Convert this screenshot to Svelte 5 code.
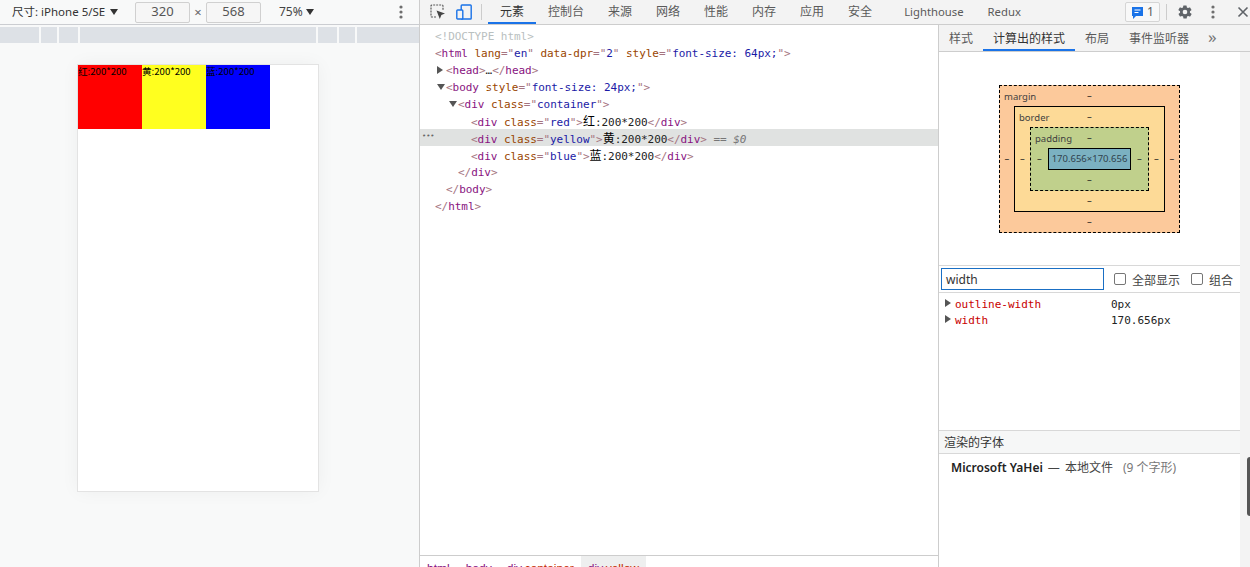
<script lang="ts">
	const mainTabs = ['元素', '控制台', '来源', '网络', '性能', '内存', '应用', '安全', 'Lighthouse', 'Redux'];
	const sideTabs = ['样式', '计算出的样式', '布局', '事件监听器'];
	const colors = [
		{ name: 'red', glyph: '红' },
		{ name: 'yellow', glyph: '黄' },
		{ name: 'blue', glyph: '蓝' }
	];
</script>

{#snippet dots()}
	<svg class="dots" width="4" height="14" viewBox="0 0 4 14"><circle cx="2" cy="2" r="1.6" /><circle cx="2" cy="7" r="1.6" /><circle cx="2" cy="12" r="1.6" /></svg>
{/snippet}

{#snippet open(name: string, attr: string, value: string)}
	<span class="br">&lt;</span><span class="tag">{name}</span>
	<span class="attr">{attr}</span><span class="br">="</span><span class="val">{value}</span><span class="br">"&gt;</span>
{/snippet}

<div class="page">
	<section class="device-pane">
		<header class="device-bar">
			<span class="size-label">尺寸: iPhone 5/SE</span>
			<i class="arrow-down"></i>
			<span class="dim first">320</span>
			<span class="times">×</span>
			<span class="dim">568</span>
			<span class="zoom-label">75%</span>
			<i class="arrow-down"></i>
			<span class="bar-dots">{@render dots()}</span>
		</header>
		<div class="media-bar">
			<span style="width:39px"></span>
			<span style="width:16px"></span>
			<span style="width:19px"></span>
			<span style="width:236px"></span>
			<span style="width:19px"></span>
			<span style="width:16px"></span>
			<span style="width:62px"></span>
		</div>
		<div class="screen">
			{#each colors as c}
				<div class="swatch {c.name}">{c.glyph}:200*200</div>
			{/each}
		</div>
	</section>

	<section class="devtools">
		<header class="main-tabs">
			<svg class="ic-inspect" width="16" height="16" viewBox="0 0 16 16" fill="none">
				<path d="M6 13H2a1 1 0 0 1-1-1V2a1 1 0 0 1 1-1h10a1 1 0 0 1 1 1v4" stroke="#5a5a5a" stroke-width="1.2" stroke-dasharray="2 1" />
				<path d="M6.5 6.5l8.5 3-3.6 1.5L9.8 15z" fill="#444" />
			</svg>
			<svg class="ic-device" width="16" height="16" viewBox="0 0 16 16" fill="none" stroke="#1a73e8" stroke-width="1.4">
				<rect x="5.2" y="1" width="10" height="14" rx="0.8" />
				<rect x="0.8" y="6" width="6" height="9" rx="0.8" fill="#f3f3f3" />
			</svg>
			<i class="vsep"></i>
			{#each mainTabs as t, i}
				<span class="tab" class:active={i === 0} class:gap={i === 7} class:latin={i > 7}>{t}</span>
			{/each}
			<span class="issues">
				<svg width="13" height="13" viewBox="0 0 13 13"><path d="M1 1h11v9H5l-3 3v-3H1z" fill="#1a73e8" /><path d="M3.5 4h6M3.5 6.5h4" stroke="#fff" /></svg>
				1
			</span>
			<i class="vsep sep2"></i>
			<svg class="gear" width="16" height="16" viewBox="0 0 24 24"><path fill="#5f6368" d="M19.4 13a7.6 7.6 0 0 0 0-2l2.1-1.6a.5.5 0 0 0 .1-.6l-2-3.5a.5.5 0 0 0-.6-.2l-2.5 1a7.3 7.3 0 0 0-1.7-1l-.4-2.6a.5.5 0 0 0-.5-.4h-4a.5.5 0 0 0-.5.4l-.4 2.6a7.7 7.7 0 0 0-1.7 1l-2.5-1a.5.5 0 0 0-.6.2l-2 3.5a.5.5 0 0 0 .1.6L4.6 11a7.6 7.6 0 0 0 0 2l-2.1 1.6a.5.5 0 0 0-.1.6l2 3.5c.1.2.4.3.6.2l2.5-1c.5.4 1.1.7 1.7 1l.4 2.6c0 .2.2.4.5.4h4c.3 0 .5-.2.5-.4l.4-2.6c.6-.3 1.2-.6 1.7-1l2.5 1c.2.1.5 0 .6-.2l2-3.5a.5.5 0 0 0-.1-.6zM12 15.5a3.5 3.5 0 1 1 0-7 3.5 3.5 0 0 1 0 7z" /></svg>
			<span class="head-dots">{@render dots()}</span>
			<svg class="close" width="12" height="12" viewBox="0 0 12 12"><path d="M1.5 1.5l9 9M10.5 1.5l-9 9" stroke="#5f6368" stroke-width="1.6" /></svg>
		</header>

		<div class="panels">
			<div class="elements">
				<div class="tree">
					<div class="row l0"><span class="doctype">&lt;!DOCTYPE html&gt;</span></div>
					<div class="row l0">
						<span class="br">&lt;</span><span class="tag">html</span>
						<span class="attr">lang</span><span class="br">="</span><span class="val">en</span><span class="br">"</span>
						<span class="attr">data-dpr</span><span class="br">="</span><span class="val">2</span><span class="br">"</span>
						<span class="attr">style</span><span class="br">="</span><span class="val">font-size: 64px;</span><span class="br">"&gt;</span>
					</div>
					<div class="row l1"><i class="tri closed"></i><span class="br">&lt;</span><span class="tag">head</span><span class="br">&gt;</span>…<span class="br">&lt;/</span><span class="tag">head</span><span class="br">&gt;</span></div>
					<div class="row l1"><i class="tri"></i>{@render open('body', 'style', 'font-size: 24px;')}</div>
					<div class="row l2"><i class="tri"></i>{@render open('div', 'class', 'container')}</div>
					{#each colors as c}
						<div class="row l3" class:selected={c.name === 'yellow'}>
							{#if c.name === 'yellow'}<span class="more">•••</span>{/if}
							{@render open('div', 'class', c.name)}<span class="cjk">{c.glyph}</span>:200*200<span class="br">&lt;/</span><span class="tag">div</span><span class="br">&gt;</span>
							{#if c.name === 'yellow'}<span class="eq">== $0</span>{/if}
						</div>
					{/each}
					<div class="row l2"><span class="br">&lt;/</span><span class="tag">div</span><span class="br">&gt;</span></div>
					<div class="row l1"><span class="br">&lt;/</span><span class="tag">body</span><span class="br">&gt;</span></div>
					<div class="row l0"><span class="br">&lt;/</span><span class="tag">html</span><span class="br">&gt;</span></div>
				</div>
				<footer class="crumbs">
					<span class="crumb"><b>html</b></span>
					<span class="crumb"><b>body</b></span>
					<span class="crumb"><b>div</b><em>.container</em></span>
					<span class="crumb on"><b>div</b><em>.yellow</em></span>
				</footer>
			</div>

			<aside class="sidebar">
				<div class="side-tabs">
					{#each sideTabs as t, i}
						<span class="side-tab" class:active={i === 1}>{t}</span>
					{/each}
					<span class="chevrons">»</span>
				</div>
				<div class="side-body">
					<div class="side-main">
						<div class="model">
							<div class="box margin">
								<span class="box-label">margin</span>
								<span class="top">–</span><span class="left">–</span>
								<div class="box border">
									<span class="box-label">border</span>
									<span class="top">–</span><span class="left">–</span>
									<div class="box padding">
										<span class="box-label">padding</span>
										<span class="top">–</span><span class="left">–</span>
										<div class="content">170.656×170.656</div>
										<span class="right">–</span><span class="bottom">–</span>
									</div>
									<span class="right">–</span><span class="bottom">–</span>
								</div>
								<span class="right">–</span><span class="bottom">–</span>
							</div>
						</div>

						<div class="filter">
							<span class="filter-input">width</span>
							<label><i class="check"></i>全部显示</label>
							<label><i class="check"></i>组合</label>
						</div>
						<div class="props">
							<div class="prop"><i class="tri closed"></i><span class="prop-name">outline-width</span><span class="prop-val">0px</span></div>
							<div class="prop"><i class="tri closed"></i><span class="prop-name">width</span><span class="prop-val">170.656px</span></div>
						</div>

						<div class="fonts-head">渲染的字体</div>
						<div class="font-line">
							<strong>Microsoft YaHei</strong>
							<span>—</span>
							<span>本地文件</span>
							<span class="glyphs">(9 个字形)</span>
						</div>
					</div>
					<div class="scroll"><i class="thumb"></i></div>
				</div>
			</aside>
		</div>
	</section>
</div>

<style>
	:global(body) {
		margin: 0;
		overflow: hidden;
	}

	.page {
		display: flex;
		width: 1250px;
		height: 567px;
		overflow: hidden;
		background: #fff;
		color: #333;
		font: 12px 'Noto Sans', 'Noto Sans CJK SC', sans-serif;
	}

	i {
		display: block;
		flex: none;
	}

	/* device emulation pane */
	.device-pane {
		width: 419px;
		flex: none;
		background: #f8f9f9;
		border-right: 1px solid #cdcdcd;
		display: flex;
		flex-direction: column;
	}

	.device-bar {
		height: 24px;
		flex: none;
		display: flex;
		align-items: center;
		padding-left: 12px;
		border-bottom: 1px solid #cbcdd1;
	}

	.size-label {
		width: 98px;
		padding-bottom: 2px;
		font-size: 11.5px;
		white-space: nowrap;
	}

	.arrow-down {
		width: 0;
		height: 0;
		border: 4px solid transparent;
		border-top: 6px solid #333;
		border-bottom: 0;
	}

	.dim {
		width: 53px;
		height: 19px;
		border: 1px solid #d0d0d0;
		border-radius: 2px;
		background: #f6f6f6;
		color: #555;
		font-size: 13px;
		line-height: 17px;
		text-align: center;
	}

	.dim.first {
		margin-left: 17px;
	}

	.times {
		width: 16px;
		text-align: center;
		color: #666;
		font-size: 13px;
	}

	.zoom-label {
		margin: 0 3px 0 18px;
		padding-bottom: 2px;
		color: #444;
	}

	.bar-dots {
		margin-left: 85px;
		display: flex;
	}

	.dots {
		fill: #6e6e6e;
	}

	.media-bar {
		display: flex;
		gap: 2px;
		margin-top: 2px;
		flex: none;
	}

	.media-bar span {
		height: 16px;
		background: #dde1e6;
	}

	.screen {
		width: 240px;
		height: 426px;
		margin: 22px 0 0 78px;
		display: flex;
		align-items: flex-start;
		background: #fff;
		outline: 1px solid #e3e3e3;
		box-shadow: 0 0 18px rgba(0, 0, 0, 0.05);
	}

	.swatch {
		width: 64px;
		height: 64px;
		color: #000;
		font: 9.6px/12px 'Noto Sans CJK SC', sans-serif;
		white-space: nowrap;
	}

	.red {
		background: #ff0000;
	}

	.yellow {
		background: #ffff1f;
	}

	.blue {
		background: #0000ff;
	}

	/* devtools */
	.devtools {
		flex: 1;
		min-width: 0;
		display: flex;
		flex-direction: column;
	}

	.main-tabs {
		height: 24px;
		flex: none;
		display: flex;
		align-items: center;
		background: #f3f3f3;
		border-bottom: 1px solid #cdcdcd;
		color: #5a5a5a;
	}

	.ic-inspect {
		margin-left: 10px;
	}

	.ic-device {
		margin-left: 10px;
	}

	.vsep {
		width: 1px;
		height: 16px;
		margin: 0 6px 0 9px;
		background: #ccc;
	}

	.tab {
		height: 24px;
		line-height: 24px;
		padding: 0 12px;
		box-sizing: border-box;
		white-space: nowrap;
	}

	.tab.gap {
		padding-right: 20px;
	}

	.tab.latin {
		font-size: 11.3px;
	}

	.tab.active {
		color: #333;
		border-bottom: 2px solid #1a73e8;
	}

	.issues {
		width: 35px;
		height: 20px;
		margin-left: auto;
		display: flex;
		align-items: center;
		justify-content: center;
		gap: 3px;
		box-sizing: border-box;
		border: 1px solid #d5d5d5;
		border-radius: 2px;
		background: #f8f8f8;
		line-height: 1;
	}

	.sep2 {
		margin: 0 10px 0 6px;
	}

	.head-dots {
		display: flex;
		margin-left: 18px;
	}

	.close {
		margin: 0 1px 0 22px;
	}

	.panels {
		flex: 1;
		min-height: 0;
		display: flex;
	}

	/* elements tree */
	.elements {
		width: 518px;
		flex: none;
		display: flex;
		flex-direction: column;
		border-right: 1px solid #cdcdcd;
	}

	.tree {
		flex: 1;
		padding-top: 2px;
		font: 11px/19px 'DejaVu Sans Mono', monospace;
		letter-spacing: -0.04px;
		color: #222;
	}

	.row {
		position: relative;
		height: 17px;
		white-space: nowrap;
	}

	.l0 {
		padding-left: 15px;
	}

	.l1 {
		padding-left: 26px;
	}

	.l2 {
		padding-left: 38px;
	}

	.l3 {
		padding-left: 51px;
	}

	.selected {
		background: #e0e2e1;
	}

	.more {
		position: absolute;
		left: 2px;
		top: -2px;
		color: #666;
		font-size: 7px;
	}

	.eq {
		color: #777;
		font-style: italic;
	}

	.cjk {
		font: 12px/17px 'Noto Sans CJK SC', sans-serif;
		color: #000;
	}

	.doctype {
		color: #b9c0c0;
	}

	.br {
		color: #a5747f;
	}

	.tag {
		color: #881280;
	}

	.attr {
		color: #994500;
	}

	.val {
		color: #1a1aa6;
	}

	.tri {
		position: absolute;
		width: 0;
		height: 0;
		margin: 6px 0 0 -9px;
		border: 4px solid transparent;
		border-top: 6px solid #555;
		border-bottom: 0;
	}

	.tri.closed {
		margin-top: 5px;
		border: 4px solid transparent;
		border-left: 6px solid #555;
		border-right: 0;
	}

	.crumbs {
		height: 11px;
		flex: none;
		display: flex;
		border-top: 1px solid #cdcdcd;
		overflow: hidden;
		font: 12px/26px 'Liberation Sans', sans-serif;
	}

	.crumb {
		padding: 0 7px;
		height: 11px;
	}

	.crumb:first-child {
		padding-right: 9px;
	}

	.crumb:nth-child(2) {
		padding-right: 8px;
	}

	.crumb b {
		font-weight: 400;
		color: #881280;
	}

	.crumb em {
		font-style: normal;
		color: #c42b00;
	}

	.crumb.on {
		background: #eeefef;
	}

	/* right sidebar */
	.sidebar {
		flex: 1;
		min-width: 0;
		display: flex;
		flex-direction: column;
	}

	.side-tabs {
		height: 26px;
		flex: none;
		display: flex;
		background: #f3f3f3;
		border-bottom: 1px solid #cdcdcd;
		color: #5a5a5a;
	}

	.side-tab {
		height: 26px;
		padding: 0 10px;
		line-height: 27px;
		box-sizing: border-box;
		white-space: nowrap;
	}

	.side-tab.active {
		color: #333;
		border-bottom: 2px solid #1a73e8;
	}

	.chevrons {
		margin-left: 9px;
		font-size: 17px;
		line-height: 24px;
		color: #777;
	}

	.side-body {
		flex: 1;
		min-height: 0;
		display: flex;
	}

	.side-main {
		flex: 1;
		min-width: 0;
		display: flex;
		flex-direction: column;
	}

	.model {
		height: 214px;
		flex: none;
		padding: 33px 0 0 60px;
		box-sizing: border-box;
		border-bottom: 1px solid #d8d8d8;
		font-size: 9.5px;
		color: #222;
	}

	.box {
		position: relative;
		display: grid;
		grid-template-columns: 14px auto 14px;
		grid-template-rows: 20px auto 20px;
		grid-template-areas: '. top .' 'left mid right' '. bottom .';
		width: fit-content;
		align-items: center;
		justify-items: center;
		line-height: 1;
	}

	.box > .box,
	.box > .content {
		grid-area: mid;
	}

	.top {
		grid-area: top;
	}

	.left {
		grid-area: left;
	}

	.right {
		grid-area: right;
	}

	.bottom {
		grid-area: bottom;
	}

	.box-label {
		position: absolute;
		left: 4px;
		top: 6px;
		color: #3f3f3f;
	}

	.margin {
		border: 1px dashed #000;
		background: #fcc99b;
	}

	.border {
		border: 1px solid #000;
		background: #fdda97;
		grid-template-columns: 15px auto 15px;
	}

	.padding {
		border: 1px dashed #000;
		background: #c0d08c;
		grid-template-columns: 17px auto 17px;
	}

	.content {
		width: 81px;
		height: 20px;
		border: 1px solid #000;
		background: #7bb1c1;
		font-size: 9.5px;
		line-height: 20px;
		text-align: center;
		white-space: nowrap;
		color: #30424d;
	}

	.filter {
		height: 26px;
		flex: none;
		display: flex;
		align-items: center;
		gap: 9px;
		padding-left: 2px;
		border-bottom: 1px solid #d8d8d8;
		color: #444;
	}

	.filter-input {
		width: 157px;
		height: 20px;
		margin-right: 1px;
		padding-left: 4px;
		border: 1px solid #1a6fc4;
		line-height: 22px;
		color: #333;
	}

	.filter label {
		display: flex;
		align-items: center;
		gap: 6px;
		padding-top: 2px;
	}

	.filter label + label {
		margin-left: 2px;
	}

	.check {
		width: 10px;
		height: 10px;
		margin-top: -2px;
		border: 1px solid #767676;
		border-radius: 2px;
		background: #fff;
	}

	.props {
		height: 138px;
		flex: none;
		padding-top: 4px;
		box-sizing: border-box;
		font: 11px/16px 'DejaVu Sans Mono', monospace;
		border-bottom: 1px solid #d8d8d8;
	}

	.prop {
		position: relative;
		display: flex;
		padding-left: 16px;
		height: 16px;
	}

	.prop .tri {
		left: 15px;
		margin-top: 2px;
	}

	.prop-name {
		width: 156px;
		color: #c80000;
	}

	.prop-val {
		color: #222;
	}

	.fonts-head {
		height: 22px;
		flex: none;
		padding-left: 5px;
		background: #f6f7f7;
		border-bottom: 1px solid #d8d8d8;
		line-height: 24px;
	}

	.font-line {
		display: flex;
		gap: 5px;
		padding: 5px 0 0 12px;
		line-height: 17px;
		color: #444;
	}

	.font-line strong {
		color: #222;
		font-weight: 600;
	}

	.glyphs {
		margin-left: 5px;
		color: #777;
	}

	.scroll {
		position: relative;
		width: 10px;
		flex: none;
		background: #f3f3f3;
	}

	.thumb {
		position: absolute;
		right: 0;
		top: 405px;
		width: 3px;
		height: 59px;
		background: #555;
		border-radius: 3px 0 0 3px;
	}
</style>
